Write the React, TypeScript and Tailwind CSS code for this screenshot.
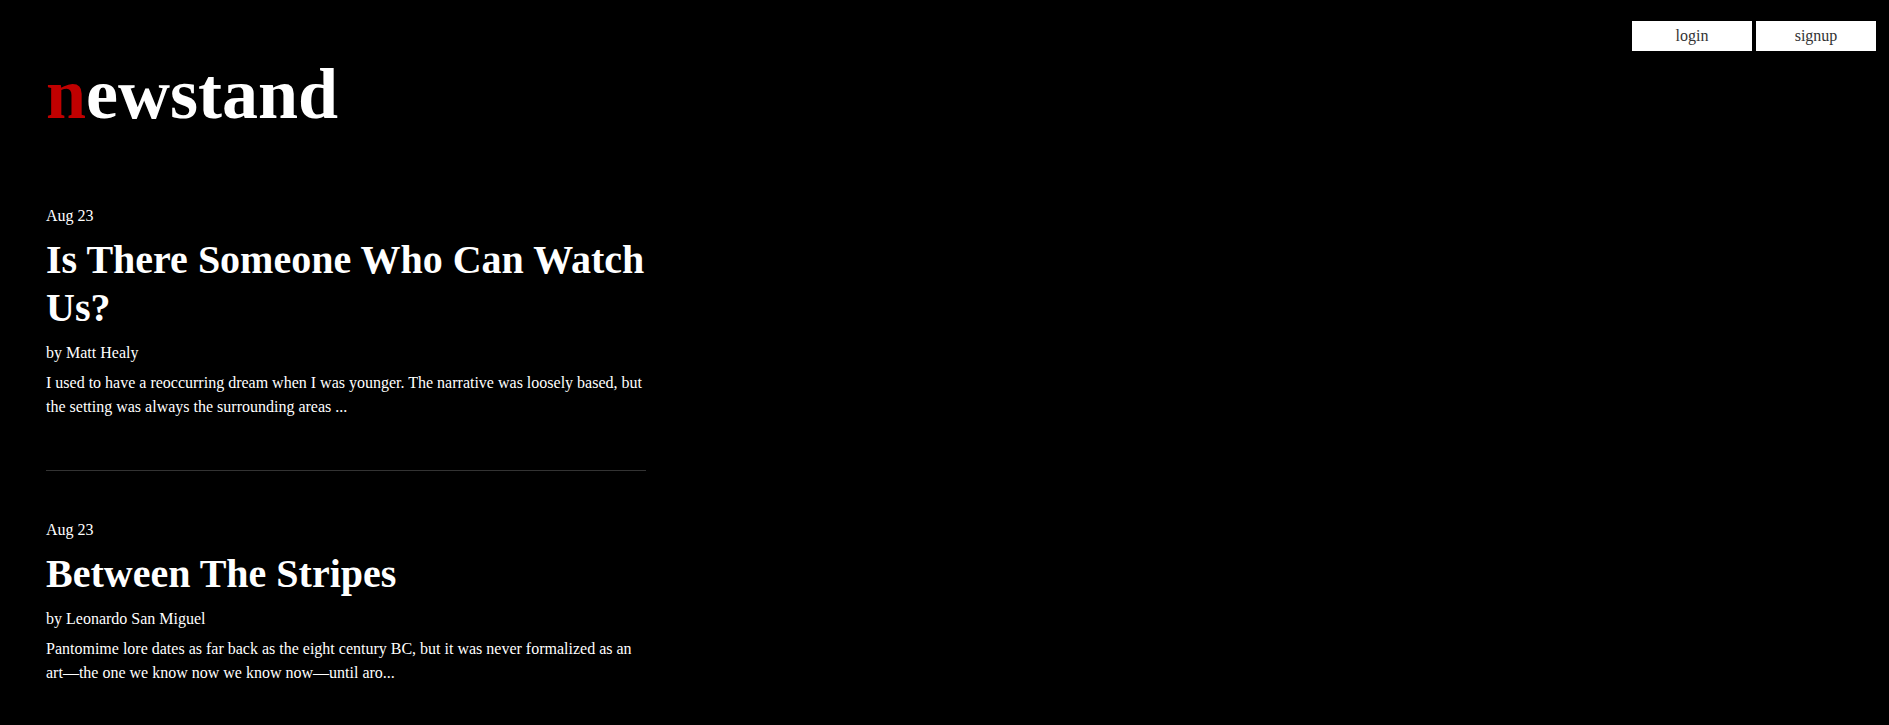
const posts = [
  {
    date: "Aug 23",
    title: "Is There Someone Who Can Watch Us?",
    author: "Matt Healy",
    summary:
      "I used to have a reoccurring dream when I was younger. The narrative was loosely based, but the setting was always the surrounding areas ...",
  },
  {
    date: "Aug 23",
    title: "Between The Stripes",
    author: "Leonardo San Miguel",
    summary:
      "Pantomime lore dates as far back as the eight century BC, but it was never formalized as an art\u2014the one we know now we know now\u2014until aro...",
  },
];

export default function App() {
  return (
    <div className="min-h-[725px] w-full bg-black font-['Liberation_Serif',serif] text-white">
      {/* nav */}
      <div className="flex justify-end gap-1 pt-[21px] pr-[13px]">
        <button className="h-[30px] w-[120px] bg-white text-base text-[#333]">login</button>
        <button className="h-[30px] w-[120px] bg-white text-base text-[#333]">signup</button>
      </div>

      <div className="pl-[46px]">
        <h1 className="mt-[7px] text-[72px] font-bold leading-[72px]">
          <span className="text-[#c00000]">n</span>ewstand
        </h1>

        <div className="mt-[27px] w-[600px]">
          {posts.map((post, i) => (
            <div
              key={i}
              className={
                i === 0
                  ? "border-b border-[#333] pt-[47px] pb-[51px]"
                  : "pt-[47px] pb-[50px]"
              }
            >
              <p className="text-base leading-6">{post.date}</p>
              <h2 className="mt-2 text-[40px] font-bold leading-[48px]">{post.title}</h2>
              <p className="mt-[9px] text-base leading-6">by {post.author}</p>
              <p className="mt-[6px] text-base leading-6">{post.summary}</p>
            </div>
          ))}
        </div>
      </div>
    </div>
  );
}
